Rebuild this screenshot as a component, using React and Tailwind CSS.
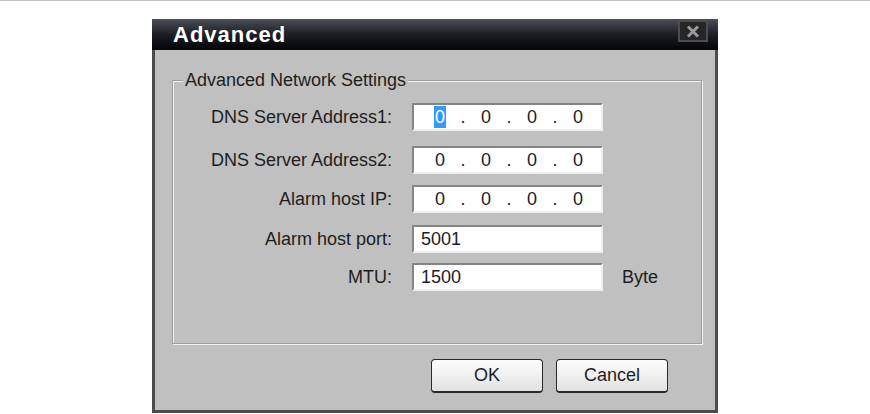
import React from 'react'

const font = { fontFamily: '"Liberation Sans", Arial, sans-serif' }

const rows = [
  { label: 'DNS Server Address1:', ip: true, selected: true, mt: 'mt-[13px]' },
  { label: 'DNS Server Address2:', ip: true, mt: 'mt-[15px]' },
  { label: 'Alarm host IP:', ip: true, mt: 'mt-[11px]' },
  { label: 'Alarm host port:', value: '5001', mt: 'mt-[12px]' },
  { label: 'MTU:', value: '1500', unit: 'Byte', mt: 'mt-[10px]' },
]

function IpField({ selected }) {
  const octets = ['0', '0', '0', '0']
  return (
    <div className="flex h-full items-center pl-[14px]">
      {octets.map((o, i) => (
        <React.Fragment key={i}>
          {i > 0 ? <span className="w-[22px] text-center">.</span> : null}
          <span className="flex w-[24px] justify-center">
            {selected && i === 0 ? (
              <span className="bg-[#3399ff] px-[1px] leading-[22px] text-white">{o}</span>
            ) : (
              o
            )}
          </span>
        </React.Fragment>
      ))}
    </div>
  )
}

function Field({ row }) {
  return (
    <div className="h-[28px] w-[191px] border-2 border-t-[#858585] border-l-[#858585] border-b-[#eeeeee] border-r-[#eeeeee] bg-white text-[18px] text-[#1c1c2a]">
      {row.ip ? (
        <IpField selected={row.selected} />
      ) : (
        <div className="flex h-full items-center pl-[7px]">{row.value}</div>
      )}
    </div>
  )
}

export default function App() {
  return (
    <div className="min-h-screen bg-white" style={font}>
      <div className="h-px bg-[#c4c4c4]" />
      <div className="mx-auto mt-[18px] flex h-[394px] w-[566px] flex-col">
        <div className="flex h-[31px] shrink-0 items-center justify-between bg-gradient-to-b from-[#4c4f56] via-[#1d1f24] to-[#040507] pl-[21px]">
          <span className="text-[22px] font-bold tracking-[1px] text-white">Advanced</span>
          <div className="mr-[10px] mt-[1px] flex h-[22px] w-[30px] shrink-0 self-start items-center justify-center border-2 border-[#4e4e50] bg-[#262628]">
            <svg width="14" height="13" viewBox="0 0 14 13">
              <path d="M2 1.5 L12 11.5 M12 1.5 L2 11.5" stroke="#9a9a9a" strokeWidth="3" />
            </svg>
          </div>
        </div>

        <div className="flex flex-1 flex-col border-[3px] border-t-0 border-[#4b4b50] bg-[#c0c0c0] pt-[20px]">
          <fieldset className="ml-[17px] h-[274px] w-[530px] border border-[#9e9e9e] shadow-[1px_1px_0_#f2f2f2,inset_1px_1px_0_#f2f2f2]">
            <legend className="ml-[10px] bg-[#c0c0c0] px-[2px] text-[18px] leading-[20px] text-[#1e1e1e]">
              Advanced Network Settings
            </legend>
            {rows.map((row) => (
              <div key={row.label} className={`flex items-center ${row.mt}`}>
                <span className="w-[219px] text-right text-[18px] text-[#1e1e1e]">{row.label}</span>
                <div className="ml-[20px]">
                  <Field row={row} />
                </div>
                {row.unit ? <span className="ml-[19px] text-[18px] text-[#1e1e1e]">{row.unit}</span> : null}
              </div>
            ))}
          </fieldset>

          <div className="mt-[15px] flex justify-end gap-[13px] pr-[47px]">
            <button className="h-[34px] w-[112px] rounded-[4px] border border-b-2 border-[#2a2a2a] bg-gradient-to-b from-[#fdfdfd] to-[#e2e2e2] text-[18px] text-[#1e1e1e]">
              OK
            </button>
            <button className="h-[34px] w-[112px] rounded-[4px] border border-b-2 border-[#2a2a2a] bg-gradient-to-b from-[#fdfdfd] to-[#e2e2e2] text-[18px] text-[#1e1e1e]">
              Cancel
            </button>
          </div>
        </div>
      </div>
    </div>
  )
}
